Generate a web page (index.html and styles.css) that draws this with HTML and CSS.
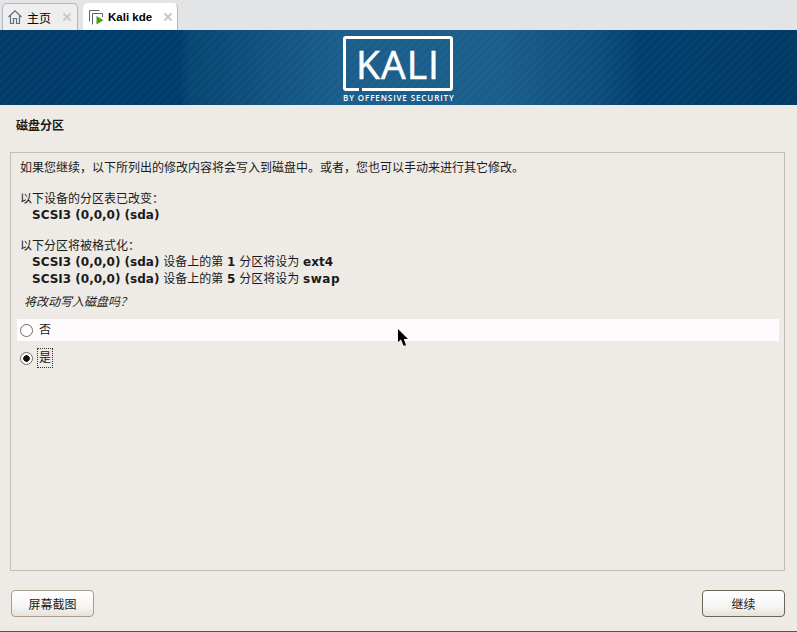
FILE: index.html
```html
<!DOCTYPE html>
<html lang="zh-CN">

<head>
    <meta charset="UTF-8">
    <meta name="viewport" content="width=device-width, initial-scale=1.0">
    <title>Kali kde</title>
    <link rel="stylesheet" href="styles.css">
</head>

<body>

    <div class="tabbar">
        <div class="tab">
            <svg class="tab-icon" width="14" height="14" viewBox="0 0 14 14" fill="none" stroke="#5f7080" stroke-width="1.2">
                <path d="M0.5 7 L7 0.8 L13.5 7" />
                <path d="M2.5 5.5 V13.5 H5.5 V8.5 H8.5 V13.5 H11.5 V5.5" />
            </svg>
            <span class="tab-title">主页</span>
            <svg class="tab-close" width="8" height="8" viewBox="0 0 8 8" stroke="#c8c8c8" stroke-width="2">
                <path d="M0.5 0.5 L7.5 7.5 M7.5 0.5 L0.5 7.5" />
            </svg>
        </div>
        <div class="tab tab-active">
            <svg class="tab-icon" width="15" height="15" viewBox="0 0 15 15" fill="none" stroke="#5b6570" stroke-width="1">
                <path d="M0.5 11.5 V0.5 H10.5" />
                <path d="M3.5 14.5 V3.5 H13.5 V7" />
                <path d="M7.5 6 V14.5 L14.5 10.2 Z" fill="#4f9e1c" stroke="none" />
            </svg>
            <span class="tab-title tab-title-bold">Kali kde</span>
            <svg class="tab-close" width="8" height="8" viewBox="0 0 8 8" stroke="#c8c8c8" stroke-width="2">
                <path d="M0.5 0.5 L7.5 7.5 M7.5 0.5 L0.5 7.5" />
            </svg>
        </div>
    </div>

    <div class="banner">
        <div class="logo">
            <div class="logo-box">KALI</div>
            <div class="logo-sub">BY OFFENSIVE SECURITY</div>
        </div>
    </div>

    <div class="main">
        <h1 class="page-title">磁盘分区</h1>

        <div class="panel">
            <p class="line">如果您继续，以下所列出的修改内容将会写入到磁盘中。或者，您也可以手动来进行其它修改。</p>
            <p class="line line-gap">以下设备的分区表已改变：</p>
            <p class="line indent"><b>SCSI3 (0,0,0) (sda)</b></p>
            <p class="line line-gap">以下分区将被格式化：</p>
            <p class="line line-tall indent"><b>SCSI3 (0,0,0) (sda)</b> 设备上的第 <b>1</b> 分区将设为 <b>ext4</b></p>
            <p class="line line-tall indent"><b>SCSI3 (0,0,0) (sda)</b> 设备上的第 <b>5</b> 分区将设为 <b class="wide">swap</b></p>
            <p class="question">将改动写入磁盘吗？</p>

            <div class="option option-hover">
                <span class="radio"></span>
                <span class="option-label">否</span>
            </div>
            <div class="option">
                <span class="radio radio-checked"></span>
                <span class="option-label option-focus">是</span>
            </div>

            <svg class="cursor" width="11" height="17" viewBox="0 0 11 17">
                <path d="M0 0 V13 L3 10.5 L5.5 16.5 L8 16.5 L5.8 10 L10 10 Z" fill="#000" />
            </svg>
        </div>

        <div class="actions">
            <button type="button" class="btn btn-light">屏幕截图</button>
            <button type="button" class="btn">继续</button>
        </div>
    </div>

</body>

</html>
```

FILE: styles.css
```css
* {
    box-sizing: border-box;
}

body {
    margin: 0;
    height: 632px;
    overflow: hidden;
    display: flex;
    flex-direction: column;
    background-color: #eeebe6;
    color: #1a1a1a;
    font-family: "DejaVu Sans", "Noto Sans CJK SC", sans-serif;
    font-size: 12px;
}

.tabbar {
    height: 30px;
    flex-shrink: 0;
    display: flex;
    align-items: flex-end;
    gap: 5px;
    padding-left: 2px;
    background-color: #e3e4e6;
}

.tab {
    width: 76px;
    height: 27px;
    display: flex;
    align-items: center;
    padding: 0 6px 0 5px;
    background-color: #eeeeef;
    border: 1px solid #b4b6b9;
    border-bottom: none;
    border-radius: 5px 5px 0 0;
    color: #000;
}

.tab-active {
    width: 95px;
    padding-right: 5px;
    background-color: #fff;
    border-color: #fff #b4b6b9 #fff #fff;
}

.tab-icon {
    flex-shrink: 0;
    margin-right: 5px;
}

.tab-active .tab-icon {
    margin-right: 4px;
}

.tab-title {
    flex: 1;
    white-space: nowrap;
}

.tab-title-bold {
    font-family: "Liberation Sans", sans-serif;
    font-size: 11.5px;
    font-weight: bold;
}

.tab-close {
    flex-shrink: 0;
}

.banner {
    height: 75px;
    flex-shrink: 0;
    display: flex;
    justify-content: center;
    padding-right: 1px;
    background:
        repeating-linear-gradient(135deg, rgba(255, 255, 255, 0.025) 0 2px, transparent 2px 6px),
        linear-gradient(90deg, #003b69 0, #003d6d 180px, #084673 190px, #1b5e8c 345px, #1b5d8b 500px, #0d4d7b 600px, #033f6e 640px, #003a67 797px);
}

.logo {
    width: 110px;
    padding-top: 6px;
    color: #fff;
    text-align: center;
}

.logo-box {
    position: relative;
    height: 55px;
    border: 3px solid #fff;
    border-radius: 3px;
    font-family: "Open Sans", sans-serif;
    font-size: 39px;
    line-height: 49px;
    letter-spacing: 1px;
    -webkit-text-stroke: 0.6px #fff;
}

.logo-box::after {
    content: "";
    position: absolute;
    left: 13px;
    bottom: -3px;
    width: 3px;
    height: 3px;
    background-color: #1a5c8a;
}

.logo-sub {
    margin-top: 2px;
    font-family: "Open Sans", sans-serif;
    font-size: 8px;
    font-weight: 600;
    line-height: 9px;
    letter-spacing: 0.9px;
    white-space: nowrap;
}

.main {
    flex: 1;
    display: flex;
    flex-direction: column;
    padding: 0 12px 1px 10px;
    border-bottom: 1px solid #55554f;
}

.page-title {
    margin: 0;
    padding: 14px 0 0 6px;
    height: 47px;
    font-size: 12px;
    font-weight: bold;
    line-height: 15px;
}

.panel {
    position: relative;
    height: 419px;
    padding: 7px 5px 0 6px;
    border: 1px solid #c6bdb0;
}

.line {
    margin: 0 0 0 3px;
    line-height: 16px;
    white-space: nowrap;
}

.line-gap {
    margin-top: 15px;
}

.line-tall {
    line-height: 17px;
}

.indent {
    padding-left: 12px;
}

.wide {
    letter-spacing: 0.5px;
}

.question {
    margin: 6px 0 9px 7px;
    line-height: 16px;
    font-style: italic;
}

.option {
    height: 22px;
    display: flex;
    align-items: center;
    padding-left: 3px;
    margin-bottom: 6px;
}

.option-hover {
    background-color: #fefbfd;
}

.radio {
    width: 13px;
    height: 13px;
    margin-right: 4px;
    border: 1px solid #6f6a62;
    border-radius: 50%;
    background-color: #fff;
}

.radio-checked {
    background: radial-gradient(circle, #111 0 3px, #fff 3.5px);
}

.option-label {
    padding: 0 1px;
    line-height: 18px;
    border: 1px solid transparent;
}

.option-focus {
    border: 1px dotted #333;
}

.cursor {
    position: absolute;
    left: 387px;
    top: 176px;
}

.actions {
    display: flex;
    justify-content: space-between;
    margin-top: 19px;
    padding-left: 1px;
}

.btn {
    width: 83px;
    height: 27px;
    padding: 0;
    border: 1px solid #6f6455;
    border-radius: 4px;
    background: linear-gradient(180deg, #fff 0%, #f7f5f3 60%, #e6e1dc 100%);
    color: #1a1a1a;
    font-family: inherit;
    font-size: 12px;
}

.btn-light {
    border-color: #a89c8c;
}
```
